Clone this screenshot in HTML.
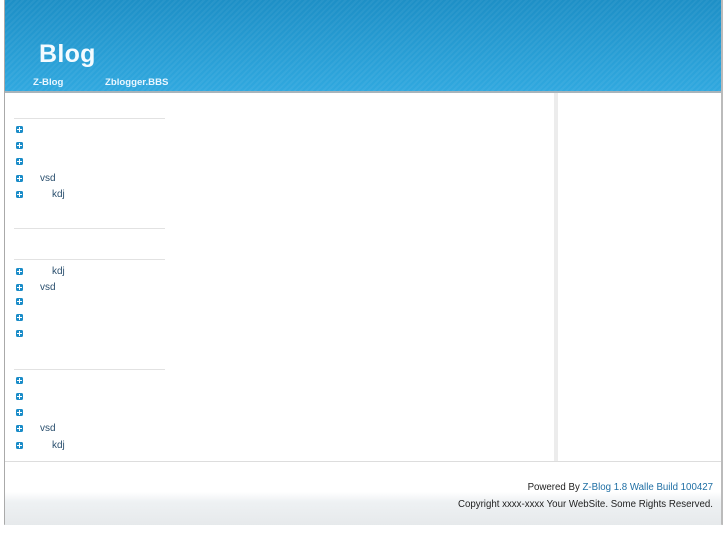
<!DOCTYPE html>
<html><head><meta charset="utf-8"><style>
*{margin:0;padding:0;box-sizing:border-box}
body{width:727px;height:545px;background:#fff;font-family:"Liberation Sans",sans-serif;position:relative;overflow:hidden}
#wrap{position:absolute;left:4px;top:0;width:719px;height:525px;border-left:1px solid #aaa;border-right:2px solid #bbb;border-bottom:1px solid #ccc;background:#fff}
#hd{position:absolute;left:0;top:0;width:100%;height:93px;background:repeating-linear-gradient(135deg,rgba(255,255,255,.05) 0 2px,rgba(0,0,0,0) 2px 4px),linear-gradient(#1d8fc6,#30a8df);border-bottom:2px solid #a8b4bb}
#hd h1{position:absolute;left:34px;top:40px;color:#f4fbff;font-size:25px;font-weight:bold;letter-spacing:0.3px}
#hd a{position:absolute;top:77px;color:#eaf6ff;font-size:9.6px;font-weight:bold}
#div{position:absolute;left:549px;top:93px;width:4px;height:368px;background:#ececec}
.sep{position:absolute;left:9px;width:151px;height:1px;background:#e2e2e2}
.it{position:absolute;left:11px;font-size:10px;color:#2a4f6e;height:12px;line-height:12px}
.it i{position:absolute;left:0;top:2px;width:7px;height:7px;background:#1a8cc8;border-radius:1.5px}
.it i:before{content:"";position:absolute;left:1px;top:3px;width:5px;height:1px;background:#fff}
.it i:after{content:"";position:absolute;left:3px;top:1px;width:1px;height:5px;background:#fff}
.it span{position:absolute;white-space:nowrap}
#ft{position:absolute;left:0;top:461px;width:100%;height:64px;border-top:1px solid #ddd;background:linear-gradient(#fff 0,#fff 30px,#eef1f3 40px,#e6e9eb 64px)}
#ft p{position:absolute;right:8px;font-size:9.7px;color:#222;white-space:nowrap}
#ft a{color:#1f6fa4}
</style></head><body><div id="wrap">
<div id="hd"><h1>Blog</h1><a style="left:28px">Z-Blog</a><a style="left:100px">Zblogger.BBS</a></div>
<div id="div"></div>
<div class="sep" style="top:118px"></div>
<div class="it" style="top:124px"><i></i></div>
<div class="it" style="top:140px"><i></i></div>
<div class="it" style="top:156px"><i></i></div>
<div class="it" style="top:173px"><i></i><span style="left:24px">vsd</span></div>
<div class="it" style="top:189px"><i></i><span style="left:36px">kdj</span></div>
<div class="sep" style="top:228px"></div>
<div class="sep" style="top:259px"></div>
<div class="it" style="top:266px"><i></i><span style="left:36px">kdj</span></div>
<div class="it" style="top:282px"><i></i><span style="left:24px">vsd</span></div>
<div class="it" style="top:296px"><i></i></div>
<div class="it" style="top:312px"><i></i></div>
<div class="it" style="top:328px"><i></i></div>
<div class="sep" style="top:369px"></div>
<div class="it" style="top:375px"><i></i></div>
<div class="it" style="top:391px"><i></i></div>
<div class="it" style="top:407px"><i></i></div>
<div class="it" style="top:423px"><i></i><span style="left:24px">vsd</span></div>
<div class="it" style="top:440px"><i></i><span style="left:36px">kdj</span></div>
<div id="ft"><p style="top:20px">Powered By <a>Z-Blog 1.8 Walle Build 100427</a></p><p style="top:37px">Copyright xxxx-xxxx Your WebSite. Some Rights Reserved.</p></div>
</div></body></html>
